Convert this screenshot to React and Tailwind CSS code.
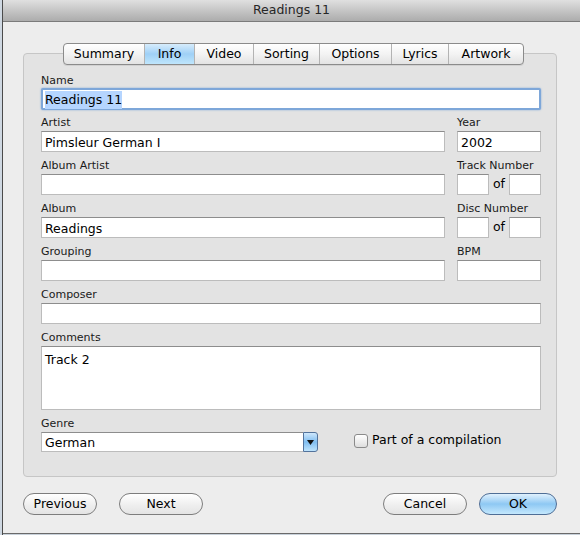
import { useState } from 'react'

const font = { fontFamily: '"DejaVu Sans", "Liberation Sans", sans-serif' }

const tabs = ['Summary', 'Info', 'Video', 'Sorting', 'Options', 'Lyrics', 'Artwork']
const tabWidths = ['w-[80px]', 'w-[50px]', 'w-[59px]', 'w-[66px]', 'w-[72px]', 'w-[57px]', 'w-[75px]']

function Label({ children, className = '' }) {
  return <div className={`h-[13px] text-[11px] leading-[13px] text-[#1a1a1a] mb-[2px] ${className}`}>{children}</div>
}

function Field({ value = '', className = '' }) {
  return (
    <div className={`h-[21px] bg-white border border-[#bcbcbc] border-t-[#8d8d8d] flex items-center px-[3px] pt-[3px] text-[12.5px] text-black ${className}`}>
      {value}
    </div>
  )
}

function Button({ children, primary, className = '' }) {
  return (
    <button
      className={`h-[22px] rounded-full border text-[12.5px] leading-none text-black ${
        primary
          ? 'border-[#4f6e96] bg-gradient-to-b from-[#e0f1fd] via-[#8ec8f3] to-[#c4e8fd]'
          : 'border-[#7d7d7d] bg-gradient-to-b from-white via-[#f0f0f0] to-[#e4e4e4]'
      } ${className}`}
    >
      {children}
    </button>
  )
}

export default function App() {
  const [active, setActive] = useState('Info')
  const [compilation, setCompilation] = useState(false)

  return (
    <div className="w-[580px] h-[535px] flex bg-[#c9d2db] overflow-hidden" style={font}>
      <div className="w-[3px] h-full bg-[#cfd8e2] border-r border-[#4b4b4b]" />
      <div className="flex-1 h-[534px] flex flex-col bg-[#ededed] border-b border-[#6a6a6a]">
        {/* title bar */}
        <div className="h-[22px] shrink-0 flex items-center justify-center bg-gradient-to-b from-[#e0e0e0] to-[#acacac] border-b border-[#7b7b7b] text-[12.5px] text-[#262626]">
          Readings 11
        </div>

        <div className="flex-1 flex flex-col pl-[20px] pr-[23px]">
          {/* tabs */}
          <div className="mt-[21px] flex pl-[40px] relative z-10">
            <div className="flex h-[22px] rounded-[4px] border border-[#8b8b8b] overflow-hidden bg-gradient-to-b from-white via-[#f3f3f3] to-[#e3e3e3] shadow-[0_1px_0_rgba(0,0,0,0.08)]">
              {tabs.map((t, i) => (
                <button
                  key={t}
                  onClick={() => setActive(t)}
                  className={`${tabWidths[i]} h-full text-[12.5px] text-black flex items-center justify-center ${
                    i > 0 ? 'border-l border-[#b3b3b3]' : ''
                  } ${active === t ? 'bg-gradient-to-b from-[#d6ecfc] via-[#9fd0f6] to-[#bfe6fc]' : ''}`}
                >
                  {t}
                </button>
              ))}
            </div>
          </div>

          {/* panel */}
          <div className="-mt-[12px] h-[424px] w-[534px] rounded-[4px] border border-[#c6c6c6] bg-[#e3e3e3] pl-[17px] pr-[15px] pt-[20px]">
            <Label>Name</Label>
            <div className="-mt-[1px] h-[22px] bg-white border-2 border-[#7ea7d9] rounded-[2px] shadow-[0_0_2px_#7ea7d9] flex items-center px-[2px] pt-[2px] text-[12.5px] text-black">
              <span className="bg-[#b5d5ff]">Readings 11</span>
            </div>

            <div className="flex gap-[12px] mt-[6px]">
              <div className="w-[404px]">
                <Label>Artist</Label>
                <Field value="Pimsleur German I" />
              </div>
              <div className="w-[84px]">
                <Label>Year</Label>
                <Field value="2002" />
              </div>
            </div>

            <div className="flex gap-[12px] mt-[7px]">
              <div className="w-[404px]">
                <Label>Album Artist</Label>
                <Field />
              </div>
              <div className="w-[84px]">
                <Label>Track Number</Label>
                <div className="flex items-center">
                  <Field className="w-[32px]" />
                  <span className="w-[20px] text-center text-[12.5px]">of</span>
                  <Field className="w-[32px]" />
                </div>
              </div>
            </div>

            <div className="flex gap-[12px] mt-[7px]">
              <div className="w-[404px]">
                <Label>Album</Label>
                <Field value="Readings" />
              </div>
              <div className="w-[84px]">
                <Label>Disc Number</Label>
                <div className="flex items-center">
                  <Field className="w-[32px]" />
                  <span className="w-[20px] text-center text-[12.5px]">of</span>
                  <Field className="w-[32px]" />
                </div>
              </div>
            </div>

            <div className="flex gap-[12px] mt-[7px]">
              <div className="w-[404px]">
                <Label>Grouping</Label>
                <Field />
              </div>
              <div className="w-[84px]">
                <Label>BPM</Label>
                <Field />
              </div>
            </div>

            <div className="mt-[7px]">
              <Label>Composer</Label>
              <Field />
            </div>

            <div className="mt-[7px]">
              <Label>Comments</Label>
              <div className="h-[64px] bg-white border border-[#bcbcbc] border-t-[#8d8d8d] px-[3px] pt-[4px] text-[12.5px] text-black">
                Track 2
              </div>
            </div>

            <div className="mt-[7px] flex items-end">
              <div className="w-[277px]">
                <Label>Genre</Label>
                <div className="h-[20px] flex">
                  <div className="flex-1 bg-white border border-[#bcbcbc] border-t-[#8d8d8d] border-r-0 flex items-center px-[3px] pt-[2px] text-[12.5px] text-black">
                    German
                  </div>
                  <div className="w-[15px] rounded-r-[3px] border border-[#53739c] bg-gradient-to-b from-[#cfe8fc] via-[#7fbdf0] to-[#bfe4fc] flex items-center justify-center">
                    <svg width="7" height="5" viewBox="0 0 7 5">
                      <path d="M0 0 H7 L3.5 5 Z" fill="#111" />
                    </svg>
                  </div>
                </div>
              </div>
              <label className="ml-[36px] mb-[2px] flex items-center gap-[4px] text-[12.5px] text-black cursor-default">
                <span
                  onClick={() => setCompilation(!compilation)}
                  className="w-[14px] h-[14px] rounded-[3px] border border-[#8a8a8a] bg-gradient-to-b from-white to-[#dedede] flex items-center justify-center text-[10px]"
                >
                  {compilation ? '✓' : ''}
                </span>
                Part of a compilation
              </label>
            </div>
          </div>

          {/* bottom buttons */}
          <div className="mt-[16px] flex items-center">
            <Button className="w-[74px]">Previous</Button>
            <Button className="w-[84px] ml-[22px]">Next</Button>
            <div className="flex-1" />
            <Button className="w-[84px]">Cancel</Button>
            <Button primary className="w-[78px] ml-[12px]">OK</Button>
          </div>
        </div>
      </div>
    </div>
  )
}
